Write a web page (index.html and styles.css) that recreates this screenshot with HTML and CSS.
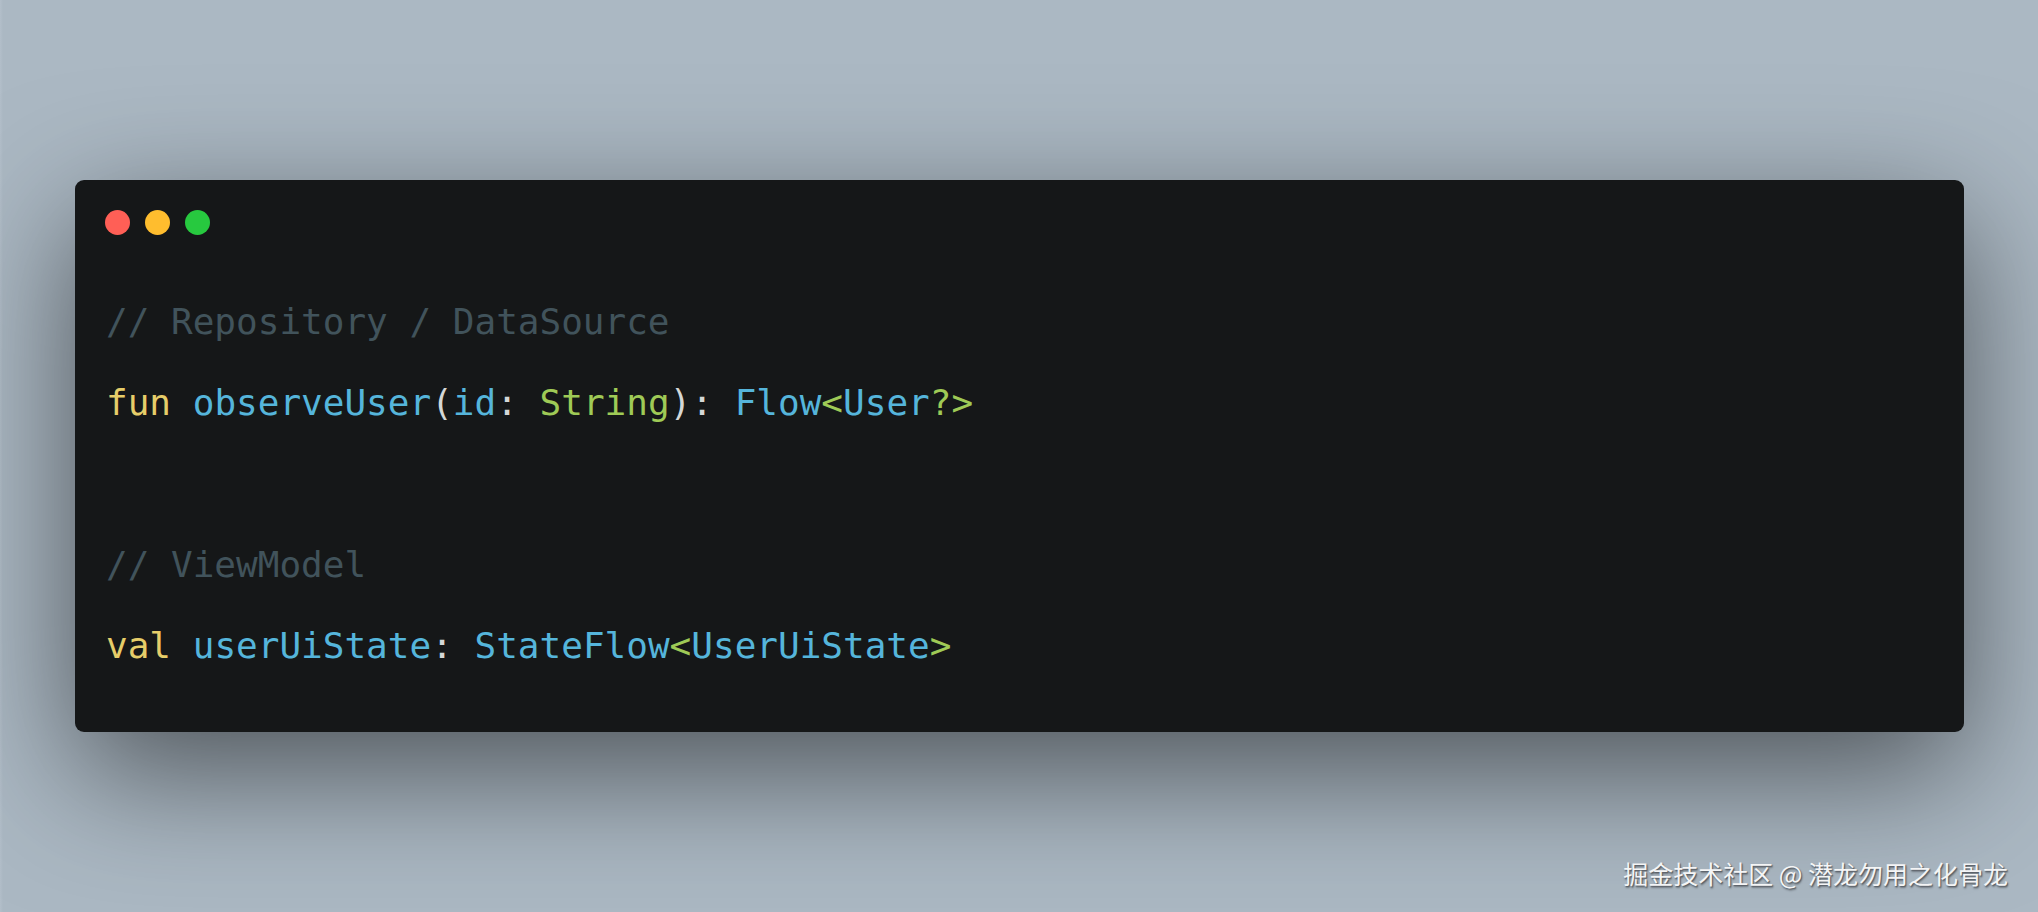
FILE: index.html
```html
<!DOCTYPE html>
<html>
<head>
<meta charset="utf-8">
<link rel="stylesheet" href="styles.css">
</head>
<body>
<div class="stage">
  <div class="window">
    <div class="dots">
      <span class="dot red"></span>
      <span class="dot yellow"></span>
      <span class="dot green"></span>
    </div>
    <pre class="code"><span class="c">// Repository / DataSource</span>
<span class="k">fun</span> <span class="f">observeUser</span><span class="p">(</span><span class="f">id</span><span class="p">:</span> <span class="t">String</span><span class="p">):</span> <span class="f">Flow</span><span class="t">&lt;</span><span class="f">User</span><span class="t">?&gt;</span>

<span class="c">// ViewModel</span>
<span class="k">val</span> <span class="f">userUiState</span><span class="p">:</span> <span class="f">StateFlow</span><span class="t">&lt;</span><span class="f">UserUiState</span><span class="t">&gt;</span></pre>
  </div>
  <div class="watermark">掘金技术社区 @ 潜龙勿用之化骨龙</div>
</div>
</body>
</html>
```

FILE: styles.css
```css
html, body {
  margin: 0;
  padding: 0;
}
body {
  background: #abb8c3;
  width: 2038px;
  height: 912px;
  overflow: hidden;
}
.stage {
  position: relative;
  width: 2038px;
  height: 912px;
  box-sizing: border-box;
  padding: 180px 0 0 75px;
  background: linear-gradient(90deg, #b3bfca 0, #abb8c3 3px);
}
.window {
  width: 1889px;
  box-sizing: border-box;
  background: #151718;
  border-radius: 9px;
  padding: 30px 30px 46px 30px;
  box-shadow: 0 40px 130px rgba(0, 0, 0, 0.55);
}
.dots {
  display: flex;
  gap: 15px;
  height: 25px;
}
.dot {
  width: 25px;
  height: 25px;
  border-radius: 50%;
}
.red { background: #ff5f56; }
.yellow { background: #ffbd2e; }
.green { background: #27c93f; }
.code {
  margin: 46px 0 0 1px;
  font-family: "DejaVu Sans Mono", "Liberation Mono", monospace;
  font-size: 36px;
  line-height: 81px;
  color: #d4d7d6;
}
.c { color: #41535b; }
.k { color: #e6cd69; }
.f { color: #55b5db; }
.t { color: #9fca56; }
.p { color: #d4d7d6; }
.watermark {
  position: absolute;
  right: 30px;
  bottom: 24px;
  font-family: "Noto Sans CJK SC", "Noto Sans", sans-serif;
  font-size: 25px;
  line-height: 30px;
  color: #f4f5f6;
  text-shadow: 1px 1px 1px #5a5f66, 1px 2px 2px rgba(0,0,0,0.35);
}
```
